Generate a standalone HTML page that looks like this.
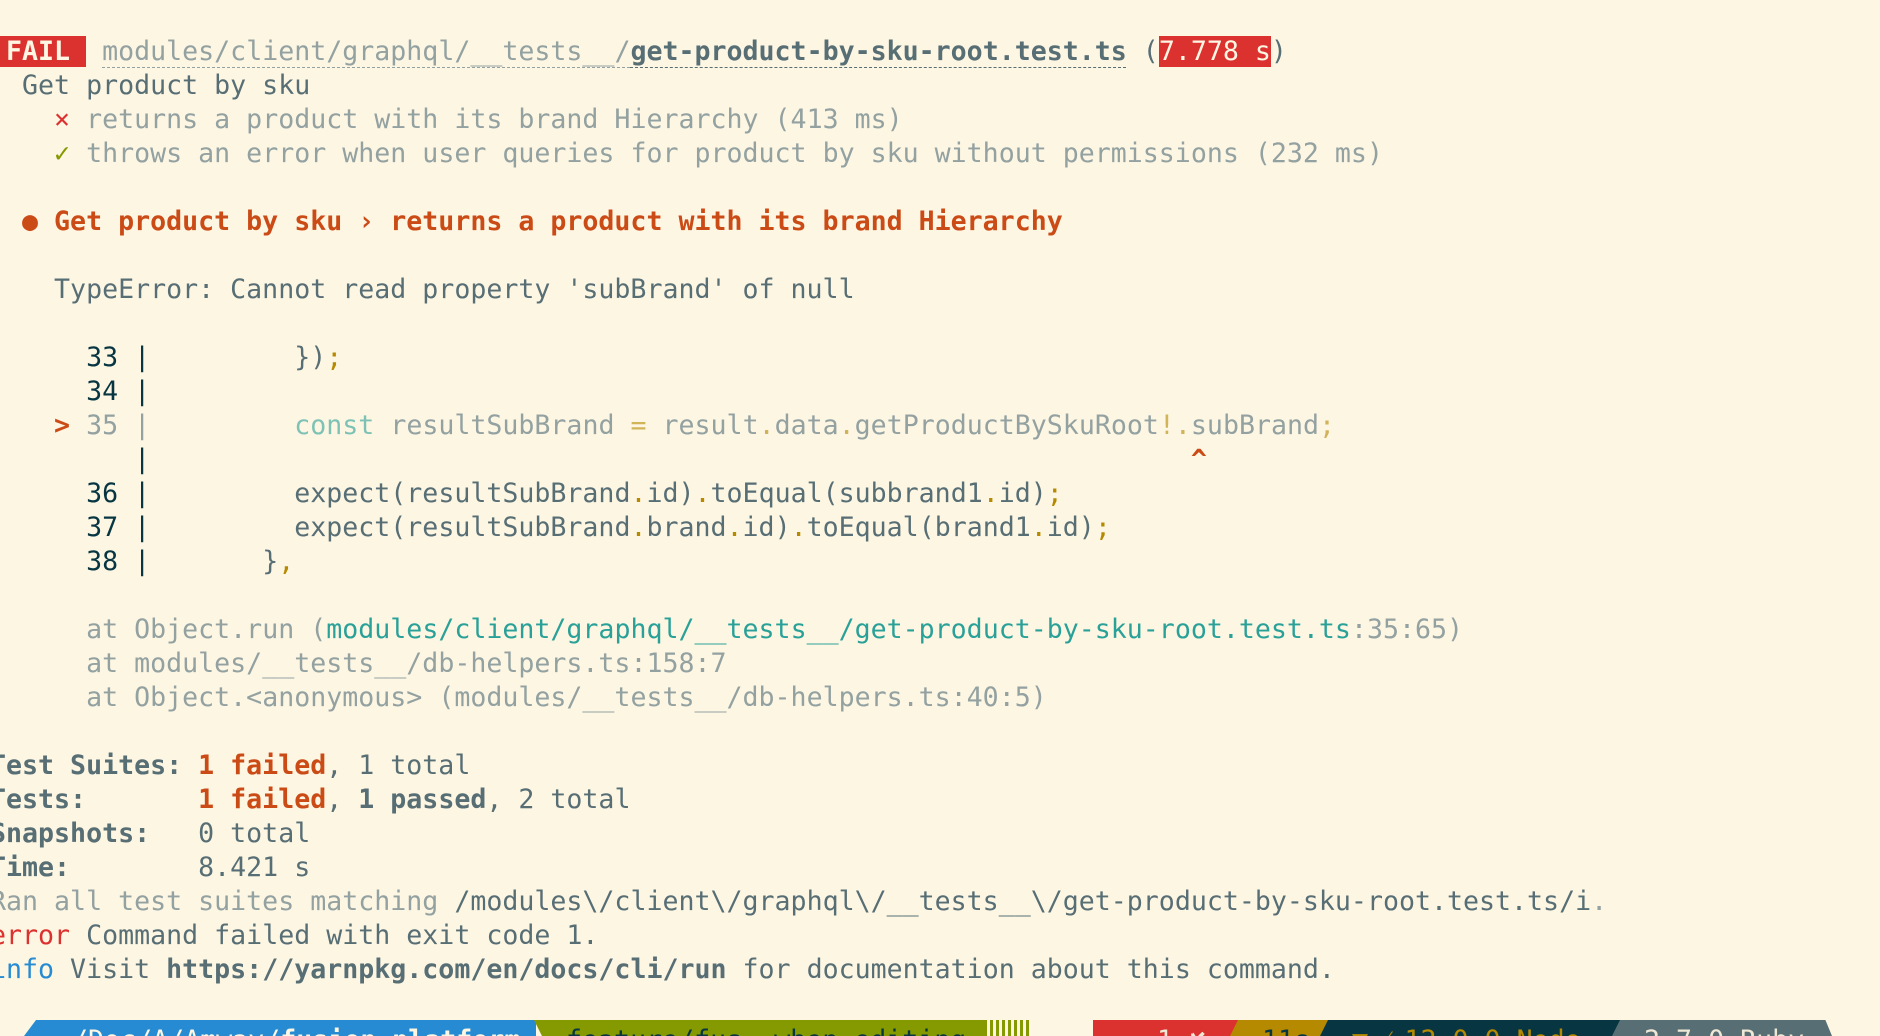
<!DOCTYPE html>
<html><head><meta charset="utf-8"><style>
html,body{margin:0;padding:0;background:#fdf6e3;width:1880px;height:1036px;overflow:hidden}
pre{position:absolute;left:-10px;top:35px;margin:0;font-family:"DejaVu Sans Mono","Liberation Mono",monospace;font-size:26.6px;line-height:34px;color:#586e75;white-space:pre}
.g{color:#93a1a1}.r{color:#dc322f}.o{color:#cb4b16}.gr{color:#859900}.c{color:#2aa198}.y{color:#b58900}.b{font-weight:bold}.bl{color:#268bd2}.d{color:#073642}
.fail{background:#dc322f;color:#fdf6e3;font-weight:bold}
.u{text-decoration:underline dashed;text-underline-offset:7px;text-decoration-thickness:1px}
.bar{position:absolute;top:1020px;height:16px;overflow:hidden;font-family:"DejaVu Sans Mono",monospace;font-size:26.6px;line-height:42px;white-space:pre}
</style></head><body>
<pre><span class="fail"> FAIL </span> <span class="g u">modules/client/graphql/__tests__/</span><span class="b u" style="color:#586e75">get-product-by-sku-root.test.ts</span> (<span class="fail" style="font-weight:normal">7.778 s</span>)
  Get product by sku
    <span class="r">×</span> <span class="g">returns a product with its brand Hierarchy (413 ms)</span>
    <span class="gr">✓</span> <span class="g">throws an error when user queries for product by sku without permissions (232 ms)</span>

<span class="o b">  ● Get product by sku › returns a product with its brand Hierarchy</span>

    TypeError: Cannot read property 'subBrand' of null

      <span class="d">33 |</span>         })<span class="y">;</span>
      <span class="d">34 |</span>
    <span class="o b">&gt;</span> <span class="g">35 |</span>         <span class="c" style="opacity:.6">const</span> <span class="g">resultSubBrand</span> <span class="y" style="opacity:.6">=</span> <span class="g">result</span><span class="y" style="opacity:.6">.</span><span class="g">data</span><span class="y" style="opacity:.6">.</span><span class="g">getProductBySkuRoot</span><span class="y" style="opacity:.6">!.</span><span class="g">subBrand</span><span class="y" style="opacity:.6">;</span>
         <span class="d">|</span>                                                                 <span class="o b">^</span>
      <span class="d">36 |</span>         expect(resultSubBrand<span class="y">.</span>id)<span class="y">.</span>toEqual(subbrand1<span class="y">.</span>id)<span class="y">;</span>
      <span class="d">37 |</span>         expect(resultSubBrand<span class="y">.</span>brand<span class="y">.</span>id)<span class="y">.</span>toEqual(brand1<span class="y">.</span>id)<span class="y">;</span>
      <span class="d">38 |</span>       }<span class="y">,</span>

      <span class="g">at Object.run (</span><span class="c">modules/client/graphql/__tests__/get-product-by-sku-root.test.ts</span><span class="g">:35:65)</span>
      <span class="g">at modules/__tests__/db-helpers.ts:158:7</span>
      <span class="g">at Object.&lt;anonymous&gt; (modules/__tests__/db-helpers.ts:40:5)</span>

<span class="b">Test Suites: </span><span class="o b">1 failed</span>, 1 total
<span class="b">Tests:       </span><span class="o b">1 failed</span>, <span class="b">1 passed</span>, 2 total
<span class="b">Snapshots:   </span>0 total
<span class="b">Time:        </span>8.421 s
<span class="g">Ran all test suites matching </span>/modules\/client\/graphql\/__tests__\/get-product-by-sku-root.test.ts/i<span class="g">.</span>
<span class="r">error</span> Command failed with exit code 1.
<span class="bl">info</span> Visit <span class="b">https://yarnpkg.com/en/docs/cli/run</span> for documentation about this command.
</pre>
<div class="bar" style="left:24px;width:512px;background:#268bd2;color:#fdf6e3;clip-path:polygon(12px 0,100% 0,100% 100%,0 100%)">  ~/Doc/A/Amway/<b>fusion-platform</b></div>
<div class="bar" style="left:534px;width:495px;background:#859900;color:#073642;clip-path:polygon(0 0,100% 0,100% 100%,8px 100%)">  feature/fus--when-editing</div>
<div class="bar" style="left:984px;width:45px;background:repeating-linear-gradient(90deg,#859900 0 3px,#fdf6e3 3px 6px)"></div>
<div class="bar" style="left:1093px;width:145px;background:#dc322f;color:#eee8d5">    1 ✘</div>
<div class="bar" style="left:1230px;width:100px;background:#b58900;color:#073642;clip-path:polygon(8px 0,100% 0,92% 100%,0 100%)">  11s</div>
<div class="bar" style="left:1320px;width:300px;background:#073642;color:#b58900;clip-path:polygon(8px 0,100% 0,100% 100%,0 100%)">  ▼ ⁄ 12.0.0 Node</div>
<div class="bar" style="left:1612px;width:220px;background:#586e75;color:#eee8d5;clip-path:polygon(8px 0,97% 0,100% 100%,0 100%)">  2.7.0 Ruby</div>
</body></html>
